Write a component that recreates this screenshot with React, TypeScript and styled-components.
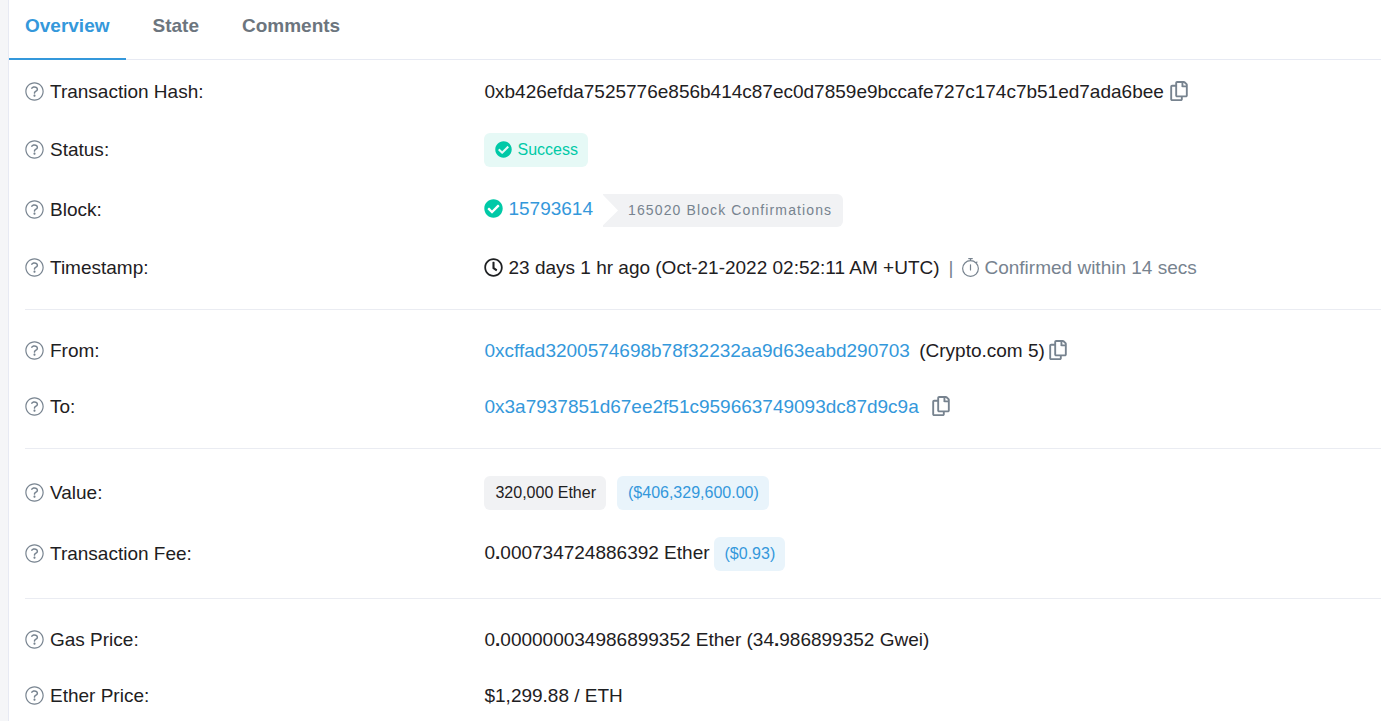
import React from "react";
import styled, { createGlobalStyle } from "styled-components";
import { FaCheckCircle, FaRegClock, FaRegCopy } from "react-icons/fa";

const GlobalStyle = createGlobalStyle`
  *, *::before, *::after { box-sizing: border-box; }
  body {
    margin: 0;
    background: #f5f6f8;
    color: #1e2022;
    font-family: "Liberation Sans", Arial, sans-serif;
    font-size: 19px;
    line-height: 29px;
  }
`;

const Card = styled.main`
  min-height: 100vh;
  margin-left: 8px;
  background: #fff;
  border-left: 1px solid #e7eaf3;
`;

const Tabs = styled.nav`
  display: flex;
  gap: 11px;
  border-bottom: 1px solid #e7eaf3;
`;

const Tab = styled.a<{ $active?: boolean }>`
  margin-bottom: -1px;
  padding: 11px 16px 18px;
  border-bottom: 2px solid ${(p) => (p.$active ? "#3498db" : "transparent")};
  color: ${(p) => (p.$active ? "#3498db" : "#6c757e")};
  font-weight: 700;
  text-decoration: none;
`;

const Body = styled.div`
  padding: 17px 0 0 16px;
`;

const Section = styled.dl<{ $top?: number }>`
  display: flex;
  flex-direction: column;
  gap: 27px;
  margin: 0;
  padding-bottom: 27px;

  &:not(:first-child) {
    padding-top: ${(p) => p.$top ?? 26}px;
    border-top: 1px solid #eaecf2;
  }
`;

const Term = styled.dt`
  display: flex;
  align-items: center;
  gap: 6px;
`;

const Value = styled.dd<{ $gap?: number }>`
  display: flex;
  align-items: center;
  gap: ${(p) => p.$gap ?? 5}px;
  margin: 0;
  white-space: nowrap;
`;

const Lead = styled.span`
  display: flex;
  align-items: center;
  gap: 5px;
  padding-bottom: 3px;
`;

const Row = styled.div<{ $badged?: boolean }>`
  display: grid;
  grid-template-columns: 33% 1fr;
  column-gap: 12px;
  align-items: center;

  ${Term} {
    padding-bottom: ${(p) => (p.$badged ? 2 : 0)}px;
  }
`;

const Link = styled.a`
  color: #3498db;
  text-decoration: none;
`;

const Icon = styled.svg`
  width: 19px;
  height: 19px;
  flex: none;
  fill: #77838f;
`;

const CopyButton = styled.button`
  display: flex;
  padding: 0 0 2px;
  border: 0;
  background: none;
  color: #77838f;
  font-size: 20px;
  cursor: pointer;

  svg {
    width: 18px;
  }
`;

const tones = {
  success: { background: "#e6f9f6", color: "#00c9a7" },
  neutral: { background: "#f1f2f4", color: "#1e2022" },
  info: { background: "#e9f4fb", color: "#3498db" },
};

const Badge = styled.span<{ $tone: keyof typeof tones }>`
  display: inline-flex;
  align-items: center;
  gap: 5px;
  height: 34px;
  padding: 0 10px 2px 11px;
  border-radius: 6px;
  background: ${(p) => tones[p.$tone].background};
  color: ${(p) => tones[p.$tone].color};
  font-size: 16px;
`;

const Confirmations = styled.span`
  height: 33px;
  margin: 0 0 -1px 5px;
  padding: 0 11px 0 25px;
  border-radius: 0 6px 6px 0;
  background: #f1f2f4;
  clip-path: polygon(0 0, 100% 0, 100% 100%, 0 100%, 0 95%, 15px 50%, 0 3%);
  color: #77838f;
  font-size: 14px;
  letter-spacing: 0.08em;
  line-height: 33px;
`;

const Check = styled(FaCheckCircle)`
  color: #00c9a7;
`;

const Muted = styled.span`
  display: flex;
  align-items: center;
  gap: 4px;
  color: #77838f;
`;

const Divider = styled.span`
  margin: 0 3px 0 4px;
  color: #77838f;
`;

const HelpIcon = () => (
  <Icon viewBox="0 0 512 512" aria-hidden="true">
    <path d="M256 340c-15.464 0-28 12.536-28 28s12.536 28 28 28 28-12.536 28-28-12.536-28-28-28zm7.67-24h-16c-6.627 0-12-5.373-12-12v-.381c0-70.343 77.44-63.619 77.44-107.408 0-20.016-17.761-40.211-57.44-40.211-29.144 0-44.265 9.649-59.211 28.692-3.908 4.98-11.054 5.995-16.248 2.376l-13.134-9.15c-5.625-3.919-6.86-11.771-2.645-17.177C185.658 133.514 210.842 116 255.67 116c52.32 0 97.44 29.751 97.44 80.211 0 67.414-77.44 63.849-77.44 107.408V304c0 6.627-5.373 12-12 12zM256 40c118.621 0 216 96.075 216 216 0 119.291-96.61 216-216 216-119.244 0-216-96.562-216-216 0-119.203 96.562-216 216-216m0-32C119.043 8 8 119.083 8 256c0 136.997 111.043 248 248 248s248-111.003 248-248C504 119.083 392.957 8 256 8z" />
  </Icon>
);

const StopwatchIcon = () => (
  <Icon viewBox="0 0 512 512" aria-hidden="true">
    <path
      fill="none"
      stroke="#77838f"
      strokeWidth="32"
      strokeLinecap="round"
      d="M256 72a212 212 0 1 0 0 424a212 212 0 1 0 0-424zM256 72V16M208 16h96M256 184v136M408 130l22-22"
    />
  </Icon>
);

const Copy = ({ what }: { what: string }) => (
  <CopyButton type="button" aria-label={`Copy ${what}`}>
    <FaRegCopy />
  </CopyButton>
);

type ItemProps = {
  label: string;
  gap?: number;
  badged?: boolean;
  children: React.ReactNode;
};

const Item = ({ label, gap, badged, children }: ItemProps) => (
  <Row $badged={badged}>
    <Term>
      <HelpIcon />
      {label}:
    </Term>
    <Value $gap={gap}>{children}</Value>
  </Row>
);

export default function App() {
  return (
    <>
      <GlobalStyle />
      <Card>
        <Tabs>
          <Tab href="#overview" $active>Overview</Tab>
          <Tab href="#state">State</Tab>
          <Tab href="#comments">Comments</Tab>
        </Tabs>
        <Body>
          <Section>
            <Item label="Transaction Hash" gap={6}>
              <span>0xb426efda7525776e856b414c87ec0d7859e9bccafe727c174c7b51ed7ada6bee</span>
              <Copy what="transaction hash" />
            </Item>
            <Item label="Status" badged>
              <Badge $tone="success">
                <FaCheckCircle size={17} />
                Success
              </Badge>
            </Item>
            <Item label="Block" badged>
              <Lead>
                <Check size={19} />
                <Link href="#block">15793614</Link>
              </Lead>
              <Confirmations>165020 Block Confirmations</Confirmations>
            </Item>
            <Item label="Timestamp">
              <FaRegClock size={19} />
              <span>23 days 1 hr ago (Oct-21-2022 02:52:11 AM +UTC)</span>
              <Divider>|</Divider>
              <Muted>
                <StopwatchIcon />
                Confirmed within 14 secs
              </Muted>
            </Item>
          </Section>
          <Section>
            <Item label="From" gap={4}>
              <Link href="#from">0xcffad3200574698b78f32232aa9d63eabd290703</Link>
              <span>&nbsp;(Crypto.com 5)</span>
              <Copy what="sender address" />
            </Item>
            <Item label="To" gap={13}>
              <Link href="#to">0x3a7937851d67ee2f51c959663749093dc87d9c9a</Link>
              <Copy what="recipient address" />
            </Item>
          </Section>
          <Section $top={27}>
            <Item label="Value" gap={11} badged>
              <Badge $tone="neutral">320,000 Ether</Badge>
              <Badge $tone="info">($406,329,600.00)</Badge>
            </Item>
            <Item label="Transaction Fee" gap={4} badged>
              <Lead>
                <span>0<b>.</b>000734724886392 Ether</span>
              </Lead>
              <Badge $tone="info">($0.93)</Badge>
            </Item>
          </Section>
          <Section>
            <Item label="Gas Price">
              <span>0<b>.</b>000000034986899352 Ether (34<b>.</b>986899352 Gwei)</span>
            </Item>
            <Item label="Ether Price">$1,299.88 / ETH</Item>
          </Section>
        </Body>
      </Card>
    </>
  );
}
